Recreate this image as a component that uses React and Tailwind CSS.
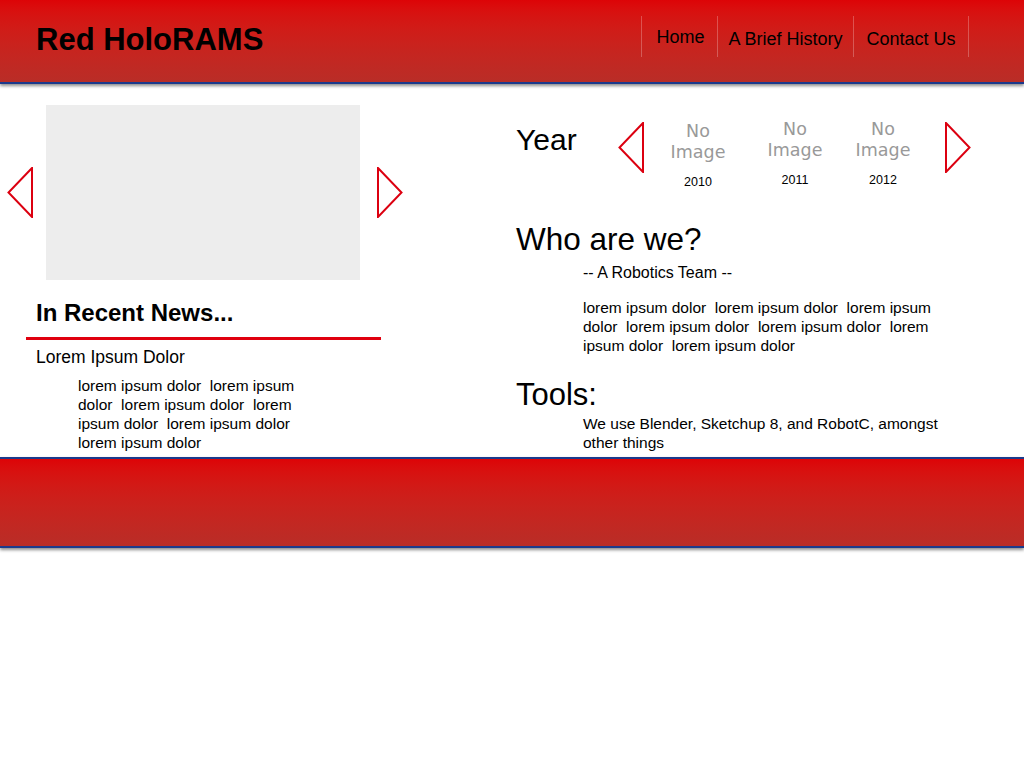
import React from 'react';

const font = { fontFamily: '"Liberation Sans", Arial, sans-serif' };

function Arrow({ dir = 'left' }) {
  const pts = dir === 'left' ? '25,1 1.5,25.5 25,50' : '1,1 24.5,25.5 1,50';
  return (
    <svg width="26" height="51" viewBox="0 0 26 51" className="shrink-0">
      <polygon points={pts} fill="none" stroke="#dc0010" strokeWidth="2" />
    </svg>
  );
}

function YearItem({ year, width, offset }) {
  return (
    <div className={`flex flex-col items-center ${width} ${offset}`}>
      <div className="text-[17.5px] leading-[21px] text-[#999999] text-center font-['DejaVu_Sans',sans-serif]">
        No<br />Image
      </div>
      <div className="mt-[11px] text-[12.5px] leading-[16px] text-black">{year}</div>
    </div>
  );
}

const lorem = 'lorem ipsum dolor\u00a0 ';

export default function App() {
  return (
    <div className="min-h-screen bg-white text-black" style={font}>
      {/* Header */}
      <header className="relative z-10 h-[84px] bg-linear-to-b from-[#dd0407] to-[#b92d27] border-b-2 border-[#1b3a8c] shadow-[0_2px_3px_rgba(0,0,0,0.45)] flex justify-between items-start">
        <div className="h-full flex items-center pl-[36px] pb-[3px]">
          <h1 className="text-[31px] font-bold leading-[36px]">Red HoloRAMS</h1>
        </div>
        <nav className="mt-[16px] mr-[55px] flex text-[18px]">
          <a className="w-[76px] h-[41px] flex items-center justify-center border-l border-white/25 pt-[1px] pl-[2px]">Home</a>
          <a className="w-[136px] h-[41px] flex items-center justify-center border-l border-white/25 pt-[5px]">A Brief History</a>
          <a className="w-[116px] h-[41px] flex items-center justify-center border-x border-white/25 pt-[5px]">Contact Us</a>
        </nav>
      </header>

      {/* Main */}
      <main className="h-[373px] flex">
        {/* Left column */}
        <section className="w-[516px] shrink-0 pt-[21px]">
          <div className="flex items-center pl-[7px] h-[175px]">
            <Arrow dir="left" />
            <div className="ml-[13px] w-[314px] h-[175px] bg-[#ededed]" />
            <div className="ml-[17px]">
              <Arrow dir="right" />
            </div>
          </div>
          <h2 className="mt-[20px] pl-[36px] text-[24px] leading-[26px] font-bold">In Recent News...</h2>
          <div className="mt-[11px] ml-[26px] w-[355px] h-[3px] bg-[#e0000f]" />
          <h3 className="mt-[7px] pl-[36px] text-[17.5px] leading-[20px]">Lorem Ipsum Dolor</h3>
          <p className="mt-[9px] ml-[78px] w-[230px] text-[15.5px] leading-[19px]">
            {lorem}{lorem}{lorem}{lorem}{lorem}lorem ipsum dolor
          </p>
        </section>

        {/* Right column */}
        <section className="flex-1 pt-[38px]">
          <div className="flex items-start h-[52px]">
            <div className="w-[102px] text-[30px] leading-[36px]">Year</div>
            <Arrow dir="left" />
            <YearItem year="2010" width="w-[108px]" offset="-mt-[1px]" />
            <YearItem year="2011" width="w-[86px]" offset="-mt-[3px]" />
            <YearItem year="2012" width="w-[90px]" offset="-mt-[3px]" />
            <div className="ml-[17px]">
              <Arrow dir="right" />
            </div>
          </div>

          <h2 className="mt-[47px] text-[31.5px] leading-[36px]">Who are we?</h2>
          <div className="pl-[67px]">
            <p className="mt-[6px] text-[16px] leading-[20px]">-- A Robotics Team --</p>
            <p className="mt-[15px] w-[365px] text-[15.5px] leading-[19px]">
              {lorem}{lorem}{lorem}{lorem}{lorem}{lorem}lorem ipsum dolor
            </p>
          </div>

          <h2 className="mt-[22px] text-[31px] leading-[36px]">Tools:</h2>
          <p className="mt-[1px] pl-[67px] w-[432px] text-[15.5px] leading-[19px]">
            We use Blender, Sketchup 8, and RobotC, amongst other things
          </p>
        </section>
      </main>

      {/* Footer */}
      <footer className="relative z-10 h-[91px] bg-linear-to-b from-[#dd0407] to-[#b92d27] border-y-2 border-[#1b3a8c] shadow-[0_2px_3px_rgba(0,0,0,0.45)]" />
    </div>
  );
}
